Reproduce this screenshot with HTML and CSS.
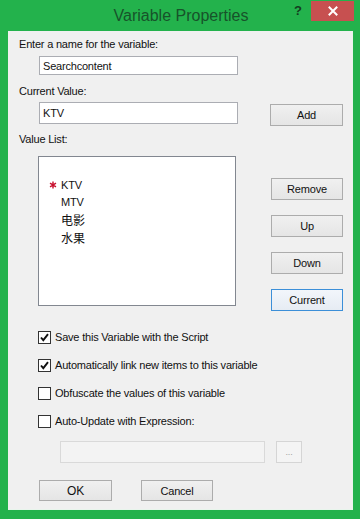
FILE: index.html
```html
<!DOCTYPE html>
<html>
<head>
<meta charset="utf-8">
<link rel="stylesheet" href="styles.css">
</head>
<body>
<div class="window">
  <div class="titlebar">
    <div class="title">Variable Properties</div>
    <div class="help">?</div>
    <div class="close">
      <svg width="10" height="10" viewBox="0 0 10 10"><path d="M1.5 1.5 L8.5 8.5 M8.5 1.5 L1.5 8.5" stroke="#fff" stroke-width="2" stroke-linecap="square"/></svg>
    </div>
  </div>
  <div class="client">
    <div class="label l1">Enter a name for the variable:</div>
    <div class="row r1">
      <div class="field f1">Searchcontent</div>
    </div>
    <div class="label l2">Current Value:</div>
    <div class="row r2">
      <div class="field f2">KTV</div>
      <div class="btn add">Add</div>
    </div>
    <div class="label l3">Value List:</div>
    <div class="row r3">
      <div class="listbox">
        <div class="item first">
          <span class="star"><svg width="8" height="8" viewBox="0 0 8 8"><path d="M4 0.5 V7.5 M1 2.2 L7 5.8 M7 2.2 L1 5.8" stroke="#c8102e" stroke-width="1.4"/></svg></span>
          <span>KTV</span>
        </div>
        <div class="item"><span class="star"></span><span>MTV</span></div>
        <div class="item"><span class="star"></span><span class="cjk">电影</span></div>
        <div class="item"><span class="star"></span><span class="cjk">水果</span></div>
      </div>
      <div class="side">
        <div class="btn">Remove</div>
        <div class="btn">Up</div>
        <div class="btn">Down</div>
        <div class="btn current">Current</div>
      </div>
    </div>
    <div class="checks">
      <div class="check">
        <span class="box"><svg width="11" height="11" viewBox="0 0 11 11"><path d="M2 5.5 L4.3 8.2 L9 2.2" fill="none" stroke="#111" stroke-width="1.9"/></svg></span>
        <span>Save this Variable with the Script</span>
      </div>
      <div class="check">
        <span class="box"><svg width="11" height="11" viewBox="0 0 11 11"><path d="M2 5.5 L4.3 8.2 L9 2.2" fill="none" stroke="#111" stroke-width="1.9"/></svg></span>
        <span>Automatically link new items to this variable</span>
      </div>
      <div class="check">
        <span class="box"></span>
        <span>Obfuscate the values of this variable</span>
      </div>
      <div class="check">
        <span class="box"></span>
        <span>Auto-Update with Expression:</span>
      </div>
    </div>
    <div class="row r4">
      <div class="field disabled"></div>
      <div class="btn dis-btn">...</div>
    </div>
    <div class="row r5">
      <div class="btn ok">OK</div>
      <div class="btn cancel">Cancel</div>
    </div>
  </div>
</div>
</body>
</html>
```

FILE: styles.css
```css
html, body {
  margin: 0;
  padding: 0;
}
body {
  font-family: "Liberation Sans", Arial, "Noto Sans CJK SC", sans-serif;
  font-size: 11px;
  letter-spacing: -0.2px;
  color: #111;
}
.window {
  width: 360px;
  height: 519px;
  background: #23b24c;
  display: flex;
  flex-direction: column;
  box-sizing: border-box;
}
.titlebar {
  height: 31px;
  flex: none;
  position: relative;
  display: flex;
  justify-content: center;
}
.title {
  font-size: 16px;
  letter-spacing: 0;
  color: #17532a;
  line-height: 31px;
  padding-left: 2px;
}
.help {
  position: absolute;
  left: 294px;
  top: 3px;
  font-size: 13px;
  font-weight: bold;
  letter-spacing: 0;
  color: #143d20;
}
.close {
  position: absolute;
  left: 311px;
  top: 1px;
  width: 43px;
  height: 20px;
  background: #c75050;
  display: flex;
  align-items: center;
  justify-content: center;
}
.client {
  flex: 1;
  margin: 0 7px 9px 8px;
  background: #f0f0f0;
  padding-left: 11px;
  box-shadow: inset -1px -1px 0 #e8f5ec;
}
.label {
  height: 14px;
  line-height: 14px;
}
.l1 { padding-top: 6px; }
.l2 { margin-top: 9px; }
.l3 { margin-top: 6px; }
.row {
  display: flex;
  align-items: flex-start;
}
.field {
  box-sizing: border-box;
  background: #fff;
  border: 1px solid #abadb3;
  padding-left: 3px;
  display: flex;
  align-items: center;
}
.r1 { margin-top: 5px; }
.f1 {
  margin-left: 20px;
  width: 199px;
  height: 19px;
}
.r2 { margin-top: 4px; height: 24px; }
.f2 {
  margin-left: 20px;
  width: 199px;
  height: 22px;
}
.btn {
  box-sizing: border-box;
  border: 1px solid #acacac;
  background: linear-gradient(#f0f0f0, #e5e5e5);
  display: flex;
  align-items: center;
  justify-content: center;
  width: 73px;
  height: 22px;
}
.add {
  margin-left: 32px;
  margin-top: 2px;
}
.r3 { margin-top: 10px; }
.listbox {
  box-sizing: border-box;
  margin-left: 19px;
  width: 198px;
  height: 150px;
  background: #fff;
  border: 1px solid #828790;
  padding-top: 19px;
}
.item {
  display: flex;
  align-items: center;
  height: 17.5px;
}
.star {
  width: 8px;
  height: 8px;
  margin-left: 10px;
  margin-right: 4px;
  display: flex;
}
.cjk {
  font-size: 12px;
  letter-spacing: 0;
  font-family: "Noto Sans CJK SC", sans-serif;
}
.side {
  margin-left: 35px;
  padding-top: 22px;
  display: flex;
  flex-direction: column;
  gap: 15px;
}
.side .btn {
  width: 72px;
}
.side .current {
  border-color: #3c8fd8;
  background: linear-gradient(#f2f6fb, #e6ecf3);
}
.checks {
  margin-top: 12px;
  margin-left: 19px;
}
.check {
  height: 28px;
  display: flex;
  align-items: center;
}
.box {
  box-sizing: border-box;
  width: 13px;
  height: 13px;
  border: 1px solid #333;
  background: #fff;
  margin-right: 4px;
  display: flex;
  align-items: center;
  justify-content: center;
}
.r4 { margin-top: 6px; }
.disabled {
  margin-left: 41px;
  width: 205px;
  height: 22px;
  background: #f3f3f3;
  border-color: #d9d9d9;
}
.dis-btn {
  margin-left: 11px;
  width: 26px;
  height: 22px;
  border-color: #d5d5d5;
  background: #f4f4f4;
  color: #a0a0a0;
  font-size: 9px;
}
.r5 { margin-top: 17px; }
.ok {
  margin-left: 20px;
  width: 73px;
  height: 21px;
  font-size: 12px;
}
.cancel {
  margin-left: 29px;
  width: 72px;
  height: 21px;
}
```
